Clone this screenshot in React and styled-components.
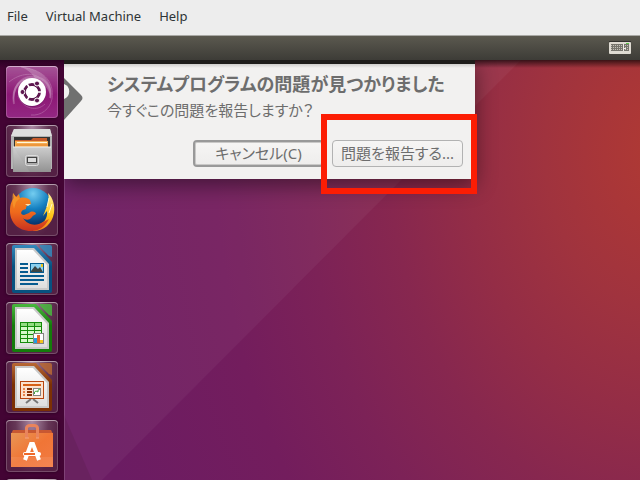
import React from 'react';
import styled, { createGlobalStyle } from 'styled-components';

const launcherItems = [
    { name: "Search your computer", Icon: DashIcon, dash: true },
    { name: "Files", Icon: FilesIcon },
    { name: "Firefox Web Browser", Icon: FirefoxIcon },
    { name: "LibreOffice Writer", Icon: WriterIcon },
    { name: "LibreOffice Calc", Icon: CalcIcon },
    { name: "LibreOffice Impress", Icon: ImpressIcon },
    { name: "Ubuntu Software", Icon: SoftwareIcon },
    { name: "System Settings", Icon: null },
]

function App() {
    return (
        <Screen>
            <GlobalStyle />
            <MenuBar>
                <MenuButton>File</MenuButton>
                <MenuButton>Virtual Machine</MenuButton>
                <MenuButton>Help</MenuButton>
            </MenuBar>
            <Panel>
                <Indicator aria-label="Keyboard">
                    <KeyboardIcon />
                </Indicator>
            </Panel>
            <Desktop>
                <Launcher>
                    {launcherItems.map(({ name, Icon, dash })=>(
                        <Tile key={name} aria-label={name} $dash={dash}>
                            {Icon && <Icon />}
                        </Tile>
                    ))}
                </Launcher>
                <Workspace>
                    <Wallpaper />
                    <Dialog role="dialog" aria-labelledby="problem-title">
                        <Pointer viewBox="0 0 20 44">
                            <path d="M0 0 L17 17 Q20 20 17 23 L0 42Z" fill="#707070" />
                            <path d="M0 6 A8 8 0 0 1 0 21Z" fill="#f2f1f0" />
                        </Pointer>
                        <Title id="problem-title">システムプログラムの問題が見つかりました</Title>
                        <Message>今すぐこの問題を報告しますか？</Message>
                        <Actions>
                            <Button $focused>キャンセル(C)</Button>
                            <Highlighted>
                                <Button>問題を報告する...</Button>
                            </Highlighted>
                        </Actions>
                    </Dialog>
                </Workspace>
            </Desktop>
        </Screen>
    )
}

export default App

function Wallpaper() {
    return (
        <WallpaperSvg viewBox="0 0 576 420" preserveAspectRatio="none" aria-hidden="true">
            <defs>
                <radialGradient
                    id="wall"
                    gradientUnits="userSpaceOnUse"
                    cx="0"
                    cy="0"
                    r="600"
                    gradientTransform="translate(601 90) scale(1 1.33)"
                >
                    <stop offset="0" stopColor="#b03a33" />
                    <stop offset="0.1" stopColor="#a93638" />
                    <stop offset="0.2" stopColor="#a0333e" />
                    <stop offset="0.33" stopColor="#942d46" />
                    <stop offset="0.46" stopColor="#87274f" />
                    <stop offset="0.6" stopColor="#7c2257" />
                    <stop offset="0.75" stopColor="#731d5d" />
                    <stop offset="1" stopColor="#6b1c63" />
                </radialGradient>
                <linearGradient id="panel-shadow" x1="0" y1="0" x2="0" y2="1">
                    <stop offset="0" stopColor="#000" stopOpacity="0.65" />
                    <stop offset="1" stopColor="#000" stopOpacity="0" />
                </linearGradient>
            </defs>
            <rect width="576" height="420" fill="url(#wall)" />
            <path d="M0 0H457L38 420H0Z" fill="#fff" opacity="0.045" />
            <path d="M0 355L28 420H0Z" fill="#5f1d50" opacity="0.4" />
            <rect width="576" height="8" fill="url(#panel-shadow)" />
            <rect width="1" height="420" fill="#fff" opacity="0.15" />
        </WallpaperSvg>
    )
}

function KeyboardIcon() {
    return (
        <svg width="22" height="14" viewBox="0 0 22 14">
            <rect width="22" height="2" fill="#33322e" />
            <rect y="1" width="22" height="12" rx="1" fill="#dfdbd2" />
            <rect x="2" y="3" width="18" height="7" fill="#77756d" />
            <path d="M2 4.5H20M2 6.5H20M2 8.5H20" stroke="#c4c1b8" strokeDasharray="1 1" />
            <path d="M14.5 3V10M14 7.5H17" stroke="#eeebe4" />
            <rect x="17" y="2" width="3" height="1" fill="#5cc84a" />
        </svg>
    )
}

function DashIcon() {
    return (
        <svg width="52" height="52" viewBox="0 0 52 52">
            <g fill="none" stroke="#fff" opacity="0.2">
                <path d="M8 38C5 23 14 9 29 11C39 12 46 20 44 32" strokeWidth="2" />
                <path d="M15 1C35 3 49 14 46 33C44 43 35 50 25 49" />
                <path d="M37 15C29 5 14 7 3 16M39 38C31 46 17 43 12 30" />
            </g>
            <path d="M15 1C36 3 49 16 45 34C43 17 31 12 16 17C10 20 8 28 8 37C4 22 13 10 29 12C25 6 20 3 15 1Z" fill="#fff" opacity="0.22" />
            <circle cx="26" cy="27" r="14" fill="#3f003f" opacity="0.3" />
            <circle cx="26" cy="26" r="14" fill="#fff" />
            <circle cx="26" cy="26" r="7.5" fill="none" stroke="#5d174f" strokeWidth="3" />
            {/* gaps between the three arms of the ring */}
            <path d="M26 26H37M26 26L20 16M26 26L20 36" stroke="#fff" strokeWidth="1.5" />
            <circle cx="26" cy="26" r="6" fill="#fff" />
            <g fill="#5d174f" stroke="#fff" strokeWidth="1">
                <circle cx="16.5" cy="26" r="2.5" />
                <circle cx="31" cy="17.5" r="2.5" />
                <circle cx="31" cy="34.5" r="2.5" />
            </g>
        </svg>
    )
}

function FilesIcon() {
    return (
        <svg width="52" height="52" viewBox="0 0 52 52">
            <defs>
                <linearGradient id="drawer" x1="0" y1="0" x2="0" y2="1">
                    <stop offset="0" stopColor="#cdcdcd" />
                    <stop offset="1" stopColor="#929292" />
                </linearGradient>
            </defs>
            <path d="M8 4H44L46 11V44H5V11Z" fill="#b4b4b4" />
            <path d="M8 4H44L46 11H5Z" fill="#dedede" />
            <path d="M8 12H44V22H8Z" fill="#343434" />
            <path d="M10 15H25L27 13H41V22H9V15Z" fill="#c75b2b" />
            <path d="M10 16H42V22H9V16Z" fill="#f3ad53" />
            <path d="M11 17H41V18H11Z" fill="#fff6df" />
            <path d="M10 20H42" stroke="#e98027" />
            <path d="M7 22H45V47H7Z" fill="url(#drawer)" />
            <path d="M7 22H45" stroke="#eee" />
            <path d="M8 23L24 47H8Z" fill="#fff" opacity="0.07" />
            <rect x="19.5" y="30.5" width="13" height="10" rx="2" fill="#ababab" stroke="#dedede" />
            <rect x="21.5" y="32.5" width="9" height="5" fill="#ddd" stroke="#444" />
        </svg>
    )
}

function FirefoxIcon() {
    return (
        <svg width="52" height="52" viewBox="0 0 52 52">
            <defs>
                <radialGradient id="globe" cx="0.5" cy="0.15" r="0.8">
                    <stop offset="0" stopColor="#74cdf0" />
                    <stop offset="0.5" stopColor="#1480c1" />
                    <stop offset="1" stopColor="#07356f" />
                </radialGradient>
                <linearGradient id="fox" x1="0" y1="0" x2="0" y2="1">
                    <stop offset="0" stopColor="#f58a20" />
                    <stop offset="0.5" stopColor="#ef6a1c" />
                    <stop offset="1" stopColor="#c93120" />
                </linearGradient>
                <linearGradient id="flame" x1="0" y1="0" x2="0" y2="1">
                    <stop offset="0" stopColor="#fff3a0" />
                    <stop offset="0.6" stopColor="#ffc517" />
                    <stop offset="1" stopColor="#f17d1b" />
                </linearGradient>
            </defs>
            <circle cx="27" cy="23" r="19" fill="url(#globe)" />
            <path d="M42 9C47 14 49 21 48 29C46 40 38 47 27 47L29 42C38 40 42 34 41 27L37 32C41 22 44 16 42 9Z" fill="url(#flame)" />
            <path d="M43 14L41 23M46 20L43 29" stroke="#fff8cd" />
            <path d="M7 9L10 13L13 10L14 14C18 13 22 14 24 16L25 20C22 20 20 22 20 25L17 26C14 28 15 31 18 31L23 29C26 26 30 28 30 30C29 31 27 31 26 33C23 37 19 36 17 34C22 42 31 42 37 38L43 35C39 43 33 47 25 47C12 47 4 38 4 27C4 20 6 16 8 14Z" fill="url(#fox)" />
            <path d="M7 9L10 13L14 14L10 18L8 25C6 19 6 13 7 9Z" fill="#f9a22e" opacity="0.6" />
            <path d="M19 20H25L22 22Z" fill="#ffe3ad" />
        </svg>
    )
}

// Page shared by the LibreOffice launchers
function OfficePage({ id, light, dark, children }) {
    return (
        <svg width="52" height="52" viewBox="0 0 52 52">
            <defs>
                <linearGradient id={id} x1="0" y1="0" x2="0" y2="1">
                    <stop offset="0" stopColor={light} />
                    <stop offset="0.45" stopColor={dark} />
                    <stop offset="1" stopColor={dark} />
                </linearGradient>
                <linearGradient id={id + "-paper"} x1="0" y1="0" x2="0" y2="1">
                    <stop offset="0" stopColor="#fff" />
                    <stop offset="1" stopColor="#dedede" />
                </linearGradient>
            </defs>
            <path d="M8 2H30L46 19V48Q46 50 44 50H8Q6 50 6 48V4Q6 2 8 2Z" fill={"url(#" + id + ")"} />
            <path d="M9 5H28L43 21V47H9Z" fill="#c9c9c9" />
            <path d="M11 7H27L41 22V45H11Z" fill={"url(#" + id + "-paper)"} />
            <path d="M34 2H44Q46 2 46 4V14Q43 14 41 11L35 5Q33 3 34 2Z" fill={light} opacity="0.85" />
            {children}
        </svg>
    )
}

function WriterIcon() {
    return (
        <OfficePage id="writer" light="#3489bd" dark="#075180">
            <path d="M14 21H22M14 25H22M14 29H22M14 33H38M14 37H38M14 41H32" stroke="#075c90" strokeWidth="2" />
            <rect x="24.5" y="20.5" width="13" height="9" fill="#8bd0ee" stroke="#075c90" />
            <path d="M25 29V28L29 23L32 26L34 24L37 29Z" fill="#3c4544" />
            <rect x="35" y="21" width="2" height="3" fill="#e9c624" />
        </OfficePage>
    )
}

function CalcIcon() {
    return (
        <OfficePage id="calc" light="#49b83e" dark="#147b0b">
            <rect x="14" y="20" width="22" height="21" fill="#148b0b" />
            {[0, 1, 2, 3, 4].map((row)=>(
                <path
                    key={row}
                    d={`M15 ${22.5 + row * 4}H21M22 ${22.5 + row * 4}H28M29 ${22.5 + row * 4}H35`}
                    stroke={row === 0 ? "#93dc83" : "#d4f8c9"}
                    strokeWidth="3"
                />
            ))}
            <rect x="27.5" y="31.5" width="10" height="10" fill="#fff" stroke="#838383" />
            <path d="M28 36H31V41H28Z" fill="#229ce1" />
            <path d="M31 33H34V41H31Z" fill="#e5682d" />
            <path d="M34 38H37V41H34Z" fill="#f1c51d" />
        </OfficePage>
    )
}

function ImpressIcon() {
    return (
        <OfficePage id="impress" light="#b96835" dark="#7c3004">
            <path d="M25 38L20 42M27 38L32 42" stroke="#777" strokeWidth="2" />
            <rect x="14.5" y="20.5" width="23" height="17" fill="#fce2ce" stroke="#b64510" />
            <path d="M17 24H35" stroke="#d66016" strokeWidth="2" />
            <path d="M17 28H19M17 31H19M17 34H19" stroke="#e8844c" strokeWidth="2" />
            <path d="M21 28H26M21 31H26M21 34H26" stroke="#873107" strokeWidth="2" />
            <rect x="27.5" y="27.5" width="7" height="7" fill="#fff" stroke="#858585" />
            <path d="M28.5 33V31L30 30L32 31V29L34 28" fill="none" stroke="#43a33e" />
        </OfficePage>
    )
}

function SoftwareIcon() {
    return (
        <svg width="52" height="52" viewBox="0 0 52 52">
            <defs>
                <linearGradient id="bag" x1="0" y1="0" x2="1" y2="1">
                    <stop offset="0" stopColor="#e89655" />
                    <stop offset="0.5" stopColor="#f07536" />
                    <stop offset="1" stopColor="#f27b43" />
                </linearGradient>
            </defs>
            <path d="M7 10H45L47 14H5Z" fill="#c85832" />
            <path d="M5 13H47V47H5Z" fill="url(#bag)" />
            <path d="M5 37H47V47H5Z" fill="#fff" opacity="0.08" />
            <path d="M20.5 18V8Q21 5.5 24 5.5H28Q31 5.5 31.5 8V18" fill="none" stroke="#e9845c" strokeWidth="3" />
            <path d="M19 18H23M30 18H33" stroke="#f5a67d" />
            <path d="M19 40L25 24H27L33 40" fill="none" stroke="#fff" strokeWidth="4" />
            <rect x="17" y="32" width="18" height="4" rx="2" fill="#fff" />
            <path d="M18 34H29" stroke="#ef692a" strokeWidth="2" />
        </svg>
    )
}

const GlobalStyle = createGlobalStyle`
    *{
        box-sizing: border-box;
    }

    body{
        margin: 0;
        font-family: "Noto Sans", "Noto Sans CJK JP", sans-serif;
    }

    button{
        font-family: inherit;
    }
`;

const Screen = styled.div`
    display: flex;
    flex-direction: column;
    height: 100vh;
    overflow: hidden;
`;

const MenuBar = styled.nav`
    display: flex;
    align-items: center;
    gap: 18px;
    height: 36px;
    padding: 0 7px 3px;
    flex-shrink: 0;
    background: #ededed;
    border-bottom: 1px solid #a9a9a5;
`;

const MenuButton = styled.button`
    padding: 0;
    border: 0;
    background: none;
    color: #2e3436;
    font-size: 13px;
    line-height: 20px;
`;

const Panel = styled.header`
    display: flex;
    align-items: center;
    justify-content: flex-end;
    height: 24px;
    padding: 0 9px;
    flex-shrink: 0;
    background: linear-gradient(#5b594f, #3d3c37);
`;

const Indicator = styled.button`
    display: flex;
    padding: 0;
    border: 0;
    background: none;
`;

const Desktop = styled.main`
    display: flex;
    flex: 1;
    min-height: 0;
`;

const Launcher = styled.nav`
    display: flex;
    flex-direction: column;
    gap: 7px;
    padding: 6px;
    flex-shrink: 0;
    overflow: hidden;
    background: linear-gradient(#2b0023, #430434 8px);
`;

const Tile = styled.button`
    width: 52px;
    height: 52px;
    padding: 0;
    flex-shrink: 0;
    overflow: hidden;
    border: 0;
    border-radius: 4px;
    background: ${({ $dash }) => $dash
        ? "linear-gradient(#a65597, #8d1876 55%, #942983)"
        : "radial-gradient(ellipse at 50% 0, #ab8ba5, #653756 45%, #542044 75%)"};
    box-shadow: inset 0 0 0 1px rgba(255, 255, 255, 0.2), inset 0 1px 0 rgba(255, 255, 255, 0.4), 0 0 3px #25001e;

    svg{
        display: block;
    }
`;

const Workspace = styled.section`
    position: relative;
    flex: 1;
    min-width: 0;
    overflow: hidden;
    background: #842750;
`;

const WallpaperSvg = styled.svg`
    position: absolute;
    inset: 0;
    width: 100%;
    height: 100%;
`;

const Dialog = styled.div`
    position: relative;
    width: 411px;
    max-width: 100%;
    padding: 8px 12px 12px 43px;
    border-top: 4px solid #1f1d1b;
    background: linear-gradient(#cfcecc, #f2f1f0 4px);
    color: #6d6d6d;
    box-shadow: 0 6px 20px rgba(0, 0, 0, 0.45);
`;

const Pointer = styled.svg`
    position: absolute;
    left: 0;
    top: 14px;
    width: 20px;
    height: 44px;
`;

const Title = styled.h1`
    margin: 0;
    font-size: 18px;
    font-weight: 700;
    line-height: 24px;
    font-feature-settings: "palt";
    white-space: nowrap;
`;

const Message = styled.p`
    margin: 3px 0 19px;
    font-size: 15px;
    line-height: 22px;
    font-feature-settings: "palt";
`;

const Actions = styled.div`
    display: flex;
    justify-content: flex-end;
    gap: 8px;
`;

const Button = styled.button`
    width: 131px;
    height: 27px;
    padding: 0 0 1px;
    border: ${({ $focused }) => $focused ? "2px solid #999" : "1px solid #b2b2b2"};
    border-radius: 4px;
    background: linear-gradient(#f6f5f4, #eeedec);
    color: #6d6d6d;
    font-size: 15px;
    line-height: 22px;
    font-feature-settings: "palt";
    white-space: nowrap;
    box-shadow: ${({ $focused }) => $focused ? "inset 0 0 0 1px #c9c8c7" : "none"};
`;

const Highlighted = styled.div`
    position: relative;

    &::after{
        content: "";
        position: absolute;
        inset: -26px -14px -27px -11px;
        border: 6px solid #fc1d04;
        pointer-events: none;
    }
`;
